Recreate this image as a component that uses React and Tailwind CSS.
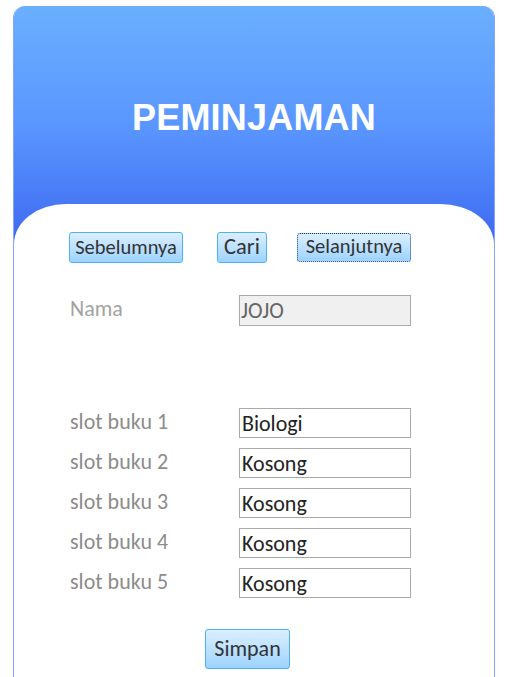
import React from "react";

const slots = ["Biologi", "Kosong", "Kosong", "Kosong", "Kosong"];

const btn =
    "h-[31px] border border-[#4fb0f2] rounded-[3px] bg-gradient-to-b from-[#dcefff] to-[#9cd3ff] text-[#333] leading-none";

const Peminjaman = () => {
    return (
        <div className="min-h-screen bg-white pt-[6px] pl-[13px] font-['Carlito','Lato','Liberation_Sans',sans-serif]">
            <div className="w-[482px] h-[671px] rounded-t-[12px] border-x border-[#86a3ff] overflow-hidden flex flex-col bg-white">
                {/* Header */}
                <div className="h-[238px] shrink-0 bg-gradient-to-b from-[#6aafff] via-[#5a96ff] to-[#3f68f0] flex justify-center pt-[91px]">
                    <h1 className="font-['Liberation_Sans',Arial,sans-serif] font-bold text-[36px] leading-[42px] text-white tracking-[0.2px]">
                        PEMINJAMAN
                    </h1>
                </div>

                {/* Panel */}
                <div className="-mt-[40px] flex-1 bg-white rounded-tl-[52px_40px] rounded-tr-[54px_40px] relative pl-[55px]">
                    <div className="flex items-start pt-[28px]">
                        <button className={`${btn} w-[114px] text-[20.5px]`}>Sebelumnya</button>
                        <button className={`${btn} w-[50px] ml-[34px] text-[22.5px]`}>Cari</button>
                        <button className="h-[29px] w-[114px] ml-[30px] mt-[1px] border border-dotted border-[#1a3f8a] rounded-[3px] bg-gradient-to-b from-[#dcefff] to-[#9cd3ff] text-[#333] text-[20.5px] leading-none pb-[2px]">
                            Selanjutnya
                        </button>
                    </div>

                    <div className="flex items-center mt-[32px]">
                        <span className="w-[170px] pl-[1px] -mt-[4px] text-[22px] text-[#a3a3a3]">Nama</span>
                        <div className="w-[172px] h-[31px] border border-[#aaa] bg-[#f0f0f0] px-[1px] flex items-center text-[22px] text-[#666]">
                            JOJO
                        </div>
                    </div>

                    <div className="flex flex-col gap-[10px] mt-[82px]">
                        {slots.map((s, i) => (
                            <div key={i} className="flex items-center">
                                <span className="w-[170px] pl-[1px] -mt-[4px] text-[22px] text-[#8c8c8c]">slot buku {i + 1}</span>
                                <div className="w-[172px] h-[30px] border border-[#aaa] bg-white px-[2px] flex items-center text-[22px] text-[#222]">
                                    {s}
                                </div>
                            </div>
                        ))}
                    </div>

                    <div className="mt-[31px] pl-[136px]">
                        <button className="h-[40px] w-[85px] border border-[#4fb0f2] rounded-[3px] bg-gradient-to-b from-[#dcefff] to-[#9cd3ff] text-[#333] text-[22px] leading-none">
                            Simpan
                        </button>
                    </div>
                </div>
            </div>
        </div>
    );
};

export default function App() {
    return <Peminjaman />;
}
